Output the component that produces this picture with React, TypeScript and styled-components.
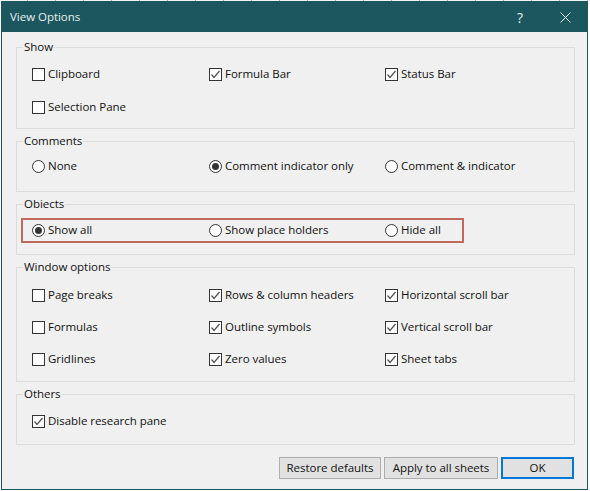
import styled, { createGlobalStyle } from "styled-components";

const GlobalStyle = createGlobalStyle`
  html, body {
    margin: 0;
    padding: 0;
    background: #fff;
  }
`;

// one pixel of the spreadsheet behind the dialog
const SheetEdge = styled.div`
  height: 1px;
  background: repeating-linear-gradient(90deg, #f4f4f4 0 27px, #a8a8a8 27px 28px);
`;

const Window = styled.div`
  box-sizing: border-box;
  width: 587px;
  height: 489px;
  margin-left: 1px;
  display: flex;
  flex-direction: column;
  background: #f0f0f0;
  border: 1px solid #1c565e;
  font-family: "Open Sans", "Noto Sans", sans-serif;
  font-size: 11.5px;
  letter-spacing: -0.03px;
  color: #111;
`;

const TitleBar = styled.div`
  height: 30px;
  flex: none;
  display: flex;
  align-items: center;
  padding-left: 8px;
  background: #1c565e;
  color: #e8f0f0;
`;

const Title = styled.span`
  flex: 1;
  margin-top: -2px;
`;

const HelpButton = styled.span`
  width: 46px;
  text-align: center;
  font-size: 14px;
`;

const CloseButton = styled.span`
  width: 44px;
  display: flex;
  justify-content: center;
`;

const Body = styled.div`
  flex: 1;
  display: flex;
  flex-direction: column;
  gap: 12px;
  padding: 15px 12px 0 14px;
`;

const Group = styled.fieldset<{ $height: number }>`
  box-sizing: border-box;
  height: ${(p) => p.$height}px;
  margin: 0;
  padding: 0;
  border: 1px solid #dcdcdc;
  position: relative;
  display: flex;
  flex-direction: column;
`;

const Legend = styled.span`
  position: absolute;
  left: 6px;
  top: -10px;
  padding: 0 1px;
  background: #f0f0f0;
  line-height: 17px;
`;

const Rows = styled.div<{ $top: number; $gap?: number }>`
  display: flex;
  flex-direction: column;
  gap: ${(p) => p.$gap ?? 0}px;
  padding-top: ${(p) => p.$top}px;
`;

const Row = styled.div`
  display: grid;
  grid-template-columns: 177px 176px 1fr;
  padding-left: 15px;
  height: 17px;
`;

const HighlightRow = styled(Row)`
  box-sizing: border-box;
  width: 443px;
  height: 25px;
  margin-left: 4px;
  padding-left: 9px;
  align-items: center;
  border: 2px solid #c0695e;
`;

const Option = styled.label`
  display: flex;
  align-items: center;
  gap: 3px;
  line-height: 17px;
  white-space: nowrap;
`;

const OptionText = styled.span`
  margin-top: -2px;
`;

const Box = styled.span`
  box-sizing: border-box;
  width: 13px;
  height: 13px;
  flex: none;
  border: 1px solid #333;
  background: #fff;
  display: flex;
`;

const Dot = styled.span<{ $on?: boolean }>`
  box-sizing: border-box;
  width: 13px;
  height: 13px;
  flex: none;
  border: 1px solid #333;
  border-radius: 50%;
  background: #fff;
  display: flex;
  align-items: center;
  justify-content: center;
  &::after {
    content: "";
    width: 7px;
    height: 7px;
    border-radius: 50%;
    background: ${(p) => (p.$on ? "#333" : "transparent")};
  }
`;

const Footer = styled.div`
  display: flex;
  justify-content: flex-end;
  gap: 3px;
  padding-right: 1px;
`;

const Button = styled.button<{ $width: number; $primary?: boolean }>`
  box-sizing: border-box;
  width: ${(p) => p.$width}px;
  height: 22px;
  padding: 0 0 2px;
  margin: 0;
  font: inherit;
  letter-spacing: inherit;
  color: #111;
  background: #e1e1e1;
  border: ${(p) => (p.$primary ? "2px solid #0078d7" : "1px solid #adadad")};
`;

const Check = ({ on, label }: { on?: boolean; label: string }) => (
  <Option>
    <Box>
      {on && (
        <svg width="11" height="11" viewBox="0 0 11 11">
          <path d="M1.5 5.5 L4 8.5 L9.5 2" fill="none" stroke="#555" strokeWidth="1.3" />
        </svg>
      )}
    </Box>
    <OptionText>{label}</OptionText>
  </Option>
);

const Radio = ({ on, label }: { on?: boolean; label: string }) => (
  <Option>
    <Dot $on={on} />
    <OptionText>{label}</OptionText>
  </Option>
);

export default function App() {
  return (
    <>
      <GlobalStyle />
      <SheetEdge />
      <Window>
        <TitleBar>
          <Title>View Options</Title>
          <HelpButton>?</HelpButton>
          <CloseButton>
            <svg width="11" height="11" viewBox="0 0 11 11">
              <path d="M0.5 0.5 L10.5 10.5 M10.5 0.5 L0.5 10.5" stroke="#e8f0f0" strokeWidth="1" />
            </svg>
          </CloseButton>
        </TitleBar>
        <Body>
          <Group $height={82}>
            <Legend>Show</Legend>
            <Rows $top={18} $gap={16}>
              <Row>
                <Check label="Clipboard" />
                <Check on label="Formula Bar" />
                <Check on label="Status Bar" />
              </Row>
              <Row>
                <Check label="Selection Pane" />
              </Row>
            </Rows>
          </Group>
          <Group $height={51}>
            <Legend>Comments</Legend>
            <Rows $top={16}>
              <Row>
                <Radio label="None" />
                <Radio on label="Comment indicator only" />
                <Radio label="Comment & indicator" />
              </Row>
            </Rows>
          </Group>
          <Group $height={51}>
            <Legend>Obiects</Legend>
            <Rows $top={13}>
              <HighlightRow>
                <Radio on label="Show all" />
                <Radio label="Show place holders" />
                <Radio label="Hide all" />
              </HighlightRow>
            </Rows>
          </Group>
          <Group $height={115}>
            <Legend>Window options</Legend>
            <Rows $top={19} $gap={15}>
              <Row>
                <Check label="Page breaks" />
                <Check on label="Rows & column headers" />
                <Check on label="Horizontal scroll bar" />
              </Row>
              <Row>
                <Check label="Formulas" />
                <Check on label="Outline symbols" />
                <Check on label="Vertical scroll bar" />
              </Row>
              <Row>
                <Check label="Gridlines" />
                <Check on label="Zero values" />
                <Check on label="Sheet tabs" />
              </Row>
            </Rows>
          </Group>
          <Group $height={51}>
            <Legend>Others</Legend>
            <Rows $top={18}>
              <Row>
                <Check on label="Disable research pane" />
              </Row>
            </Rows>
          </Group>
          <Footer>
            <Button $width={102}>Restore defaults</Button>
            <Button $width={114}>Apply to all sheets</Button>
            <Button $width={73} $primary>OK</Button>
          </Footer>
        </Body>
      </Window>
    </>
  );
}
